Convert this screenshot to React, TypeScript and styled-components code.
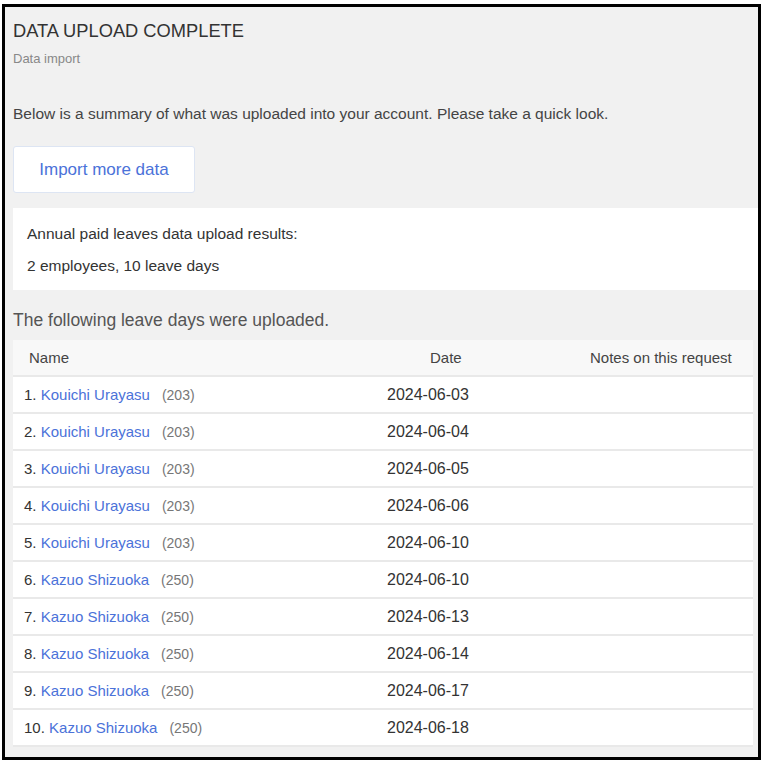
import React from "react";
import styled, { createGlobalStyle } from "styled-components";

interface ILeave {
  name: string;
  code: string;
  date: string;
}

const leaves: ILeave[] = [
  { name: "Kouichi Urayasu", code: "203", date: "2024-06-03" },
  { name: "Kouichi Urayasu", code: "203", date: "2024-06-04" },
  { name: "Kouichi Urayasu", code: "203", date: "2024-06-05" },
  { name: "Kouichi Urayasu", code: "203", date: "2024-06-06" },
  { name: "Kouichi Urayasu", code: "203", date: "2024-06-10" },
  { name: "Kazuo Shizuoka", code: "250", date: "2024-06-10" },
  { name: "Kazuo Shizuoka", code: "250", date: "2024-06-13" },
  { name: "Kazuo Shizuoka", code: "250", date: "2024-06-14" },
  { name: "Kazuo Shizuoka", code: "250", date: "2024-06-17" },
  { name: "Kazuo Shizuoka", code: "250", date: "2024-06-18" },
];

const App = () => {
  return (
    <>
      <GlobalStyle />
      <Frame>
        <Title>DATA UPLOAD COMPLETE</Title>
        <SubTitle>Data import</SubTitle>
        <Intro>
          Below is a summary of what was uploaded into your account. Please take
          a quick look.
        </Intro>
        <ImportButton>Import more data</ImportButton>
        <SummaryBox>
          <p>Annual paid leaves data upload results:</p>
          <p>2 employees, 10 leave days</p>
        </SummaryBox>
        <SectionTitle>The following leave days were uploaded.</SectionTitle>
        <LeaveTable>
          <colgroup>
            <col style={{ width: 317 }} />
            <col style={{ width: 245 }} />
            <col style={{ width: 178 }} />
          </colgroup>
          <thead>
            <tr>
              <NameHead>Name</NameHead>
              <DateHead>Date</DateHead>
              <NotesHead>Notes on this request</NotesHead>
            </tr>
          </thead>
          <tbody>
            {leaves.map((data, i) => (
              <tr key={i}>
                <NameCell>
                  {i + 1}. <EmployeeLink href="#">{data.name}</EmployeeLink>
                  <Code>({data.code})</Code>
                </NameCell>
                <DateCell>{data.date}</DateCell>
                <NotesCell />
              </tr>
            ))}
          </tbody>
        </LeaveTable>
      </Frame>
    </>
  );
};

export default App;

const GlobalStyle = createGlobalStyle`
  html, body {
    margin: 0;
    padding: 0;
    background: #ffffff;
  }
  body {
    font-family: "Liberation Sans", Arial, sans-serif;
    color: #333;
  }
`;

const Frame = styled.div`
  box-sizing: border-box;
  margin: 4px 0 0 2px;
  width: 759px;
  height: 756px;
  border: 3px solid #000;
  background: #f1f1f1;
  padding: 0 4px 0 8px;
  overflow: hidden;
`;

const Title = styled.h1`
  margin: 12px 0 0;
  font-size: 18.3px;
  font-weight: 400;
  line-height: 24px;
  color: #333;
`;

const SubTitle = styled.div`
  margin-top: 8px;
  font-size: 13px;
  line-height: 16px;
  color: #888;
`;

const Intro = styled.p`
  margin: 38px 0 0;
  font-size: 15.5px;
  line-height: 18px;
  color: #444;
`;

const ImportButton = styled.button`
  display: block;
  margin-top: 23px;
  width: 182px;
  height: 47px;
  background: #fff;
  border: 1px solid #dde5f3;
  border-radius: 3px;
  font-family: "Liberation Sans", Arial, sans-serif;
  font-size: 17px;
  color: #4b72d9;
  cursor: pointer;
`;

const SummaryBox = styled.div`
  margin: 15px -10px 0 0;
  height: 82px;
  background: #fff;
  padding: 17px 14px 0;
  box-sizing: border-box;
  p {
    margin: 0 0 14px;
    font-size: 15.5px;
    line-height: 18px;
    color: #333;
  }
`;

const SectionTitle = styled.h2`
  margin: 20px 0 0;
  font-size: 17.5px;
  font-weight: 400;
  line-height: 20px;
  color: #555;
`;

const LeaveTable = styled.table`
  margin-top: 10px;
  width: 740px;
  border-collapse: collapse;
  table-layout: fixed;
  font-size: 15px;
  tbody tr {
    height: 37px;
    background: #fff;
  }
  td {
    border-top: 2px solid #e9e9e9;
    white-space: nowrap;
  }
  tbody tr:last-child td {
    border-bottom: 2px solid #e9e9e9;
  }
`;

const HeadCell = styled.th`
  height: 35px;
  font-weight: 400;
  font-size: 15px;
  color: #444;
  background: #f8f8f8;
  padding: 0;
  white-space: nowrap;
`;

const NameHead = styled(HeadCell)`
  text-align: left;
  padding-left: 16px;
`;

const DateHead = styled(HeadCell)`
  text-align: left;
  padding-left: 100px;
`;

const NotesHead = styled(HeadCell)`
  text-align: left;
  padding-left: 15px;
`;

const NameCell = styled.td`
  padding: 0 0 0 11px;
  color: #333;
`;

const EmployeeLink = styled.a`
  color: #4b72d9;
  text-decoration: none;
`;

const Code = styled.span`
  margin-left: 12px;
  font-size: 14px;
  color: #777;
`;

const DateCell = styled.td`
  padding-left: 57px;
  font-size: 16px;
  color: #333;
`;

const NotesCell = styled.td``;
